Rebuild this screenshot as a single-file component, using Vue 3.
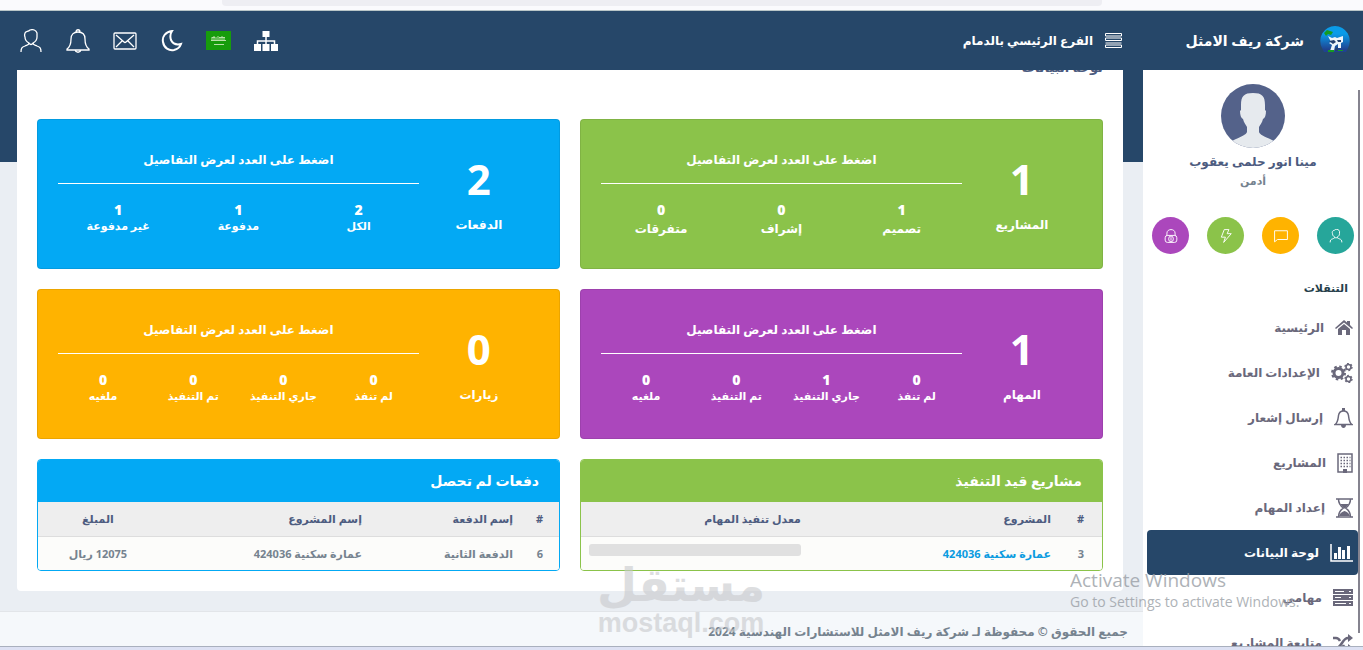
<script setup>
import { ref } from 'vue'

const person = '<path d="M1 23c0-4 1-5 4-6 2-1 4-1 4-3M21 23c0-4-1-5-4-6-2-1-4-1-4-3M5 8c-1-2 0-3 0-4 1-2 3-1 5-3 3-1 6 0 7 3v4c0 3-2 5-4 6-1 2-3 2-4 0-2-1-4-3-4-6z"/>'
const bell = '<path d="M1 20c3-2 4-5 4-10 0-5 3-7 7-7s7 2 7 7c0 5 1 8 4 10v1H1zM9 21c1 3 5 3 6 0M10 3c0-3 4-3 4 0"/>'

const topIcons = [
    { name: 'الحساب', w: 22, h: 24, art: person },
    { name: 'الإشعارات', w: 24, h: 24, art: bell },
    { name: 'الرسائل', w: 24, h: 18, art: '<rect x="1" y="1" width="22" height="16" rx="1"/><path d="M3 3l8 7q1 1 2 0l8-7M3 15l6-6M21 15l-6-6"/>' },
    { name: 'الوضع الليلي', w: 22, h: 22, art: '<path stroke-width="2" d="M11 1C4 2 1 7 2 12c1 6 6 9 11 8 4-1 6-3 7-6-4 1-8 0-10-4-1-3-1-6 1-9z"/>' },
    { name: 'اللغة', w: 25, h: 19, art: '<path fill="#179c0c" stroke="none" d="M0 0h25v19H0z"/><path stroke="#b9e0a8" stroke-width="1" d="M5 9.500h15M6 9V6M8 9V5M10 9V6M12 9V5M14 9V6M16 9V5M18 9V6M6 6.500h3M13 6.500h6M8 13.500h10"/>' },
    { name: 'الأقسام', w: 24, h: 20, art: '<path fill="currentColor" stroke="none" d="M8.500 0h7v6h-7zM0 13h7v7H0zM8.500 13h7v7h-7zM17 13h7v7h-7z"/><path stroke-width="1.500" d="M12 6v7M3.500 13v-3h17v3"/>' },
]

const shortcuts = [
    { name: 'الملف الشخصي', color: 'teal', w: 22, h: 24, art: person },
    { name: 'المحادثات', color: 'orange', w: 24, h: 24, art: '<path d="M1 3h22v15H6l-5 4z"/>' },
    { name: 'النشاط', color: 'green', w: 24, h: 24, art: '<path d="M9 1h8l-3 7h7L8 23l3-9H4z"/>' },
    { name: 'القفل', color: 'purple', w: 24, h: 24, art: '<path d="M5 12V7c0-8 14-8 14 0v5"/><rect x="2" y="11" width="20" height="12" rx="4"/><ellipse cx="12" cy="17" rx="4" ry="5"/><path d="M12 14v6"/>' },
]

const menu = [
    { label: 'الرئيسية', w: 18, h: 16, art: '<path fill="currentColor" stroke="none" d="M9 4l6 5v6h-4v-5H7v5H3V9zM9 0l3 2.500V1h3v4l3 3-1 1-8-6.500L1 9 0 8z"/>' },
    { label: 'الإعدادات العامة', w: 22, h: 20, art: '<g stroke-width="3"><circle cx="7.500" cy="10" r="4.500"/><circle cx="7.500" cy="10" r="6.500" stroke-width="2" stroke-dasharray="2.550 2.550"/></g><g stroke-width="1.600"><circle cx="17.500" cy="4" r="2.500"/><circle cx="17.500" cy="4" r="3.500" stroke-width="1.400" stroke-dasharray="1.830 1.830"/><circle cx="17.500" cy="16" r="2.500"/><circle cx="17.500" cy="16" r="3.500" stroke-width="1.400" stroke-dasharray="1.830 1.830"/></g>' },
    { label: 'إرسال إشعار', w: 19, h: 20, art: '<path stroke-width="1.500" d="M1 16.500c3-2 3-5 3.500-9C5 4 7 3 9.500 3S14 4 14.500 7.500c.5 4 .5 7 3.500 9z"/><path fill="currentColor" stroke="none" d="M7 17h5c0 4-5 4-5 0zM8 0h3v3H8z"/>' },
    { label: 'المشاريع', w: 16, h: 20, art: '<rect x="1" y="1" width="14" height="18" stroke-width="1.500"/><path stroke-width="1.500" stroke-dasharray="1.500 1.500" d="M3.500 4.500h10M3.500 7.500h10M3.500 10.500h10M3.500 13.500h10"/><path fill="currentColor" stroke="none" d="M6 16h4v4H6z"/>' },
    { label: 'إعداد المهام', w: 17, h: 20, art: '<path stroke-width="1.500" d="M0 1h17M0 19h17M2.500 1c0 5 2 7 5 9-3 2-5 4-5 9M14.500 1c0 5-2 7-5 9 3 2 5 4 5 9"/><path fill="currentColor" stroke="none" d="M4 6h9l-4.500 4.500zM3 18c1-3 3-4 5.500-5 2.500 1 4.500 2 5.500 5z"/>' },
    { label: 'لوحة البيانات', w: 23, h: 18, active: true, art: '<path stroke-width="1.500" d="M1 0v17h22"/><path fill="currentColor" stroke="none" d="M4 9h3v6H4zM8 3h3v12H8zM12 6h3v9h-3zM17 2h3v13h-3z"/>' },
    { label: 'مهامي', w: 20, h: 17, art: '<path fill="currentColor" stroke="none" fill-rule="evenodd" d="M0 0h20v5H0zM2 2v1h9V2zM16 2v1h2V2zM0 6h20v5H0zM2 8v1h6V8zM16 8v1h2V8zM0 12h20v5H0zM2 14v1h11v-1zM16 14v1h2v-1z"/>' },
    { label: 'متابعة المشاريع', w: 20, h: 18, art: '<path stroke-width="2.500" d="M0 14h3c6 0 6-10 12-10h2M0 4h3c2 0 3 1 4 3M10 11c1 2 3 3 5 3h2"/><path fill="currentColor" stroke="none" d="M15 0l5 4-5 4zM15 10l5 4-5 4z"/>' },
]

const hint = 'اضغط على العدد لعرض التفاصيل'

const cards = [
    { title: 'المشاريع', total: 1, color: 'green', large: true, stats: [['تصميم', 1], ['إشراف', 0], ['متفرقات', 0]] },
    { title: 'الدفعات', total: 2, color: 'blue', stats: [['الكل', 2], ['مدفوعة', 1], ['غير مدفوعة', 1]] },
    { title: 'المهام', total: 1, color: 'purple', stats: [['لم تنفذ', 0], ['جاري التنفيذ', 1], ['تم التنفيذ', 0], ['ملغيه', 0]] },
    { title: 'زيارات', total: 0, color: 'orange', stats: [['لم تنفذ', 0], ['جاري التنفيذ', 0], ['تم التنفيذ', 0], ['ملغيه', 0]] },
]

const progress = ref(0)
</script>


<template>
    <div class="screen" dir="rtl">
        <div class="browser-bar"><div class="address"></div></div>

        <header class="topbar">
            <a href="#" class="brand">
                <svg width="30" height="30" viewBox="0 0 30 30">
                    <defs>
                        <linearGradient id="sky" x1="0" y1="0" x2="0" y2="1">
                            <stop offset="0.3" stop-color="#0a9be8" />
                            <stop offset="0.9" stop-color="#1f4391" />
                        </linearGradient>
                    </defs>
                    <path fill="url(#sky)" d="M15 0a15 15 0 0 1 13 22l-2 4H4l-2-4A15 15 0 0 1 15 0z" />
                    <path fill="#eef4fa" d="M8 10l4 2 3-1 2 1 6-2v6l-2 1v5h-3v-4l-3 2-1 5h-4l2-6-3-2 2-1z" />
                    <path fill="#24406f" d="M9 15l5-1 2 2-3 2zM17 14h4v2h-3zM15 23l3-2v4h-3z" />
                    <path fill="#159b22" d="M4 7l3-3 6 2-2 3-3-1-2 2zM8 24h6v2H8zM18 24h5v1h-5z" />
                </svg>
                <span>شركة ريف الامثل</span>
            </a>
            <div class="branch">
                <button type="button" class="icon-btn burger" aria-label="القائمة">
                    <svg width="17" height="15" viewBox="0 0 17 15" fill="none" stroke="currentColor"><path d="M.5.500h16v2.500H.5zM.5 5h16M.5 7.500h16M.5 10h16M.5 12h16v2.500H.5zM.5 5v2.500M16.500 5v2.500" /></svg>
                </button>
                <span>الفرع الرئيسي بالدمام</span>
            </div>
            <nav class="top-icons" dir="ltr">
                <button v-for="icon in topIcons" :key="icon.name" type="button" class="icon-btn" :aria-label="icon.name">
                    <svg :width="icon.w" :height="icon.h" :viewBox="`0 0 ${icon.w} ${icon.h}`" class="line" stroke-width="1.3" v-html="icon.art"></svg>
                </button>
            </nav>
        </header>

        <div class="layout">
            <aside class="sidebar">
                <div class="profile">
                    <svg class="avatar" width="64" height="64" viewBox="0 0 64 64">
                        <clipPath id="face"><circle cx="32" cy="32" r="32" /></clipPath>
                        <g clip-path="url(#face)">
                            <path fill="#54628a" d="M0 0h64v64H0z" />
                            <path fill="#e6eaee" d="M20 21c0-9 3-12 12-12s12 3 12 12v5l1 1c0 4-1 7-3 8-1 4-3 6-4 8v5c1 3 5 4 15 9v9H11v-9c10-5 14-6 15-9v-5c-1-2-3-4-4-8-2-1-3-4-3-8l1-1z" />
                        </g>
                    </svg>
                    <h2>مينا انور حلمى يعقوب</h2>
                    <p>أدمن</p>
                </div>
                <div class="shortcuts">
                    <button v-for="s in shortcuts" :key="s.name" type="button" :class="['round', s.color]" :aria-label="s.name">
                        <svg width="14" height="14" :viewBox="`0 0 ${s.w} ${s.h}`" class="line" stroke-width="1.6" v-html="s.art"></svg>
                    </button>
                </div>
                <h3>التنقلات</h3>
                <ul class="menu">
                    <li v-for="item in menu" :key="item.label">
                        <a href="#" :class="{ active: item.active }">
                            <svg :width="item.w" :height="item.h" :viewBox="`0 0 ${item.w} ${item.h}`" class="line" v-html="item.art"></svg>
                            <span>{{ item.label }}</span>
                        </a>
                    </li>
                </ul>
                <div class="scroll-thumb"></div>
            </aside>

            <main class="main">
                <section class="panel">
                    <h1>لوحة البيانات</h1>
                    <div class="grid">
                        <article v-for="card in cards" :key="card.title" :class="['card', card.color]">
                            <div class="total">
                                <a href="#">{{ card.total }}</a>
                                <h4>{{ card.title }}</h4>
                            </div>
                            <div class="details">
                                <p class="hint">{{ hint }}</p>
                                <div :class="['stats', { large: card.large }]">
                                    <div v-for="stat in card.stats" :key="stat[0]" class="stat">
                                        <a href="#">{{ stat[1] }}</a>
                                        <span>{{ stat[0] }}</span>
                                    </div>
                                </div>
                            </div>
                        </article>

                        <article class="box green-box">
                            <h4>مشاريع قيد التنفيذ</h4>
                            <table class="projects">
                                <thead>
                                    <tr><th class="num">#</th><th class="name">المشروع</th><th id="rate">معدل تنفيذ المهام</th></tr>
                                </thead>
                                <tbody>
                                    <tr>
                                        <td>3</td>
                                        <td><a href="#">عمارة سكنية 424036</a></td>
                                        <td>
                                            <div class="progress" role="progressbar" aria-labelledby="rate" :aria-valuenow="progress">
                                                <div class="bar" :style="{ width: progress + '%' }"></div>
                                            </div>
                                        </td>
                                    </tr>
                                </tbody>
                            </table>
                        </article>

                        <article class="box blue-box">
                            <h4>دفعات لم تحصل</h4>
                            <table class="payments">
                                <thead>
                                    <tr><th class="num">#</th><th class="name">إسم الدفعة</th><th>إسم المشروع</th><th class="amount">المبلغ</th></tr>
                                </thead>
                                <tbody>
                                    <tr><td>6</td><td>الدفعة الثانية</td><td>عمارة سكنية 424036</td><td class="amount">12075 ريال</td></tr>
                                </tbody>
                            </table>
                        </article>
                    </div>
                </section>
                <footer class="footer">جميع الحقوق © محفوظة لـ شركة ريف الامثل للاستشارات الهندسية 2024</footer>
            </main>
        </div>

        <div class="taskbar"></div>

        <div class="watermark">
            <span class="mark-ar">مستقل</span>
            <span class="mark-en" dir="ltr">mostaql.com</span>
        </div>
        <div class="activate" dir="ltr">
            <strong>Activate Windows</strong>
            <span>Go to Settings to activate Windows.</span>
        </div>
    </div>
</template>

<style>
body {
    margin: 0;
}
</style>

<style scoped>
.screen {
    position: relative;
    display: flex;
    flex-direction: column;
    height: 100vh;
    overflow: hidden;
    background: #eaeef3;
    font-family: "Noto Sans", "DejaVu Sans", sans-serif;
    font-size: 11px;
    font-weight: bold;
    color: #76838f;
}

h1, h2, h3, h4, p, ul {
    margin: 0;
    padding: 0;
}

a {
    color: inherit;
    text-decoration: none;
}

button {
    border: 0;
    padding: 0;
    background: none;
    color: inherit;
    cursor: pointer;
}

svg {
    display: block;
    flex: none;
}

.line {
    fill: none;
    stroke: currentColor;
}

.browser-bar {
    flex: none;
    box-sizing: border-box;
    height: 11px;
    padding: 0 261px 0 222px;
    background: #fafafd;
    border-bottom: 1px solid #b9c6c8;
}

.address {
    height: 6px;
    background: #eeeef3;
    border-radius: 0 0 4px 4px;
}

.topbar {
    display: flex;
    flex: none;
    align-items: center;
    height: 59px;
    background: #264769;
    color: #fff;
}

.brand {
    display: flex;
    align-items: center;
    gap: 16px;
    width: 207px;
    padding-right: 13px;
    font-size: 14px;
    font-weight: 900;
}

.branch {
    display: flex;
    flex: 1;
    align-items: center;
    gap: 12px;
    padding-right: 21px;
    font-size: 12px;
}

.top-icons {
    display: flex;
    padding-left: 7px;
}

.icon-btn {
    display: flex;
    align-items: center;
    justify-content: center;
    width: 47px;
    height: 40px;
}

.burger {
    width: 17px;
}

.layout {
    display: flex;
    flex: 1;
    min-height: 0;
}

.sidebar {
    position: relative;
    flex: none;
    width: 220px;
    overflow: hidden;
    background: #fff;
}

.profile {
    display: flex;
    flex-direction: column;
    align-items: center;
    padding-top: 14px;
}

.profile h2 {
    margin-top: 4px;
    font-size: 12px;
    font-weight: 900;
    line-height: 20px;
    color: #4d5c80;
}

.profile p {
    font-size: 11px;
    line-height: 18px;
}

.shortcuts {
    display: flex;
    justify-content: space-between;
    padding: 27px 9px 0;
}

.round {
    display: flex;
    align-items: center;
    justify-content: center;
    width: 37px;
    height: 37px;
    border-radius: 50%;
    color: #fff;
}

.sidebar h3 {
    padding: 24px 15px 7px;
    font-size: 11px;
    font-weight: 900;
    line-height: 20px;
    color: #263f4b;
}

.menu {
    list-style: none;
    padding: 0 5px 0 4px;
}

.menu a {
    display: flex;
    align-items: center;
    gap: 11px;
    height: 45px;
    padding-right: 5px;
    border-radius: 4px;
    font-size: 12px;
    color: #6a687b;
}

.menu a.active {
    background: #264769;
    font-weight: 900;
    color: #fff;
}

.scroll-thumb {
    position: absolute;
    top: 20px;
    right: 3px;
    bottom: 13px;
    width: 2px;
    background: #85838f;
}

.main {
    display: flex;
    flex: 1;
    flex-direction: column;
    min-width: 0;
    overflow: hidden;
    background: linear-gradient(#264769 92px, #eaeef3 92px);
}

.panel {
    margin: 0 20px 20px 17px;
    padding: 0 20px 20px;
    background: #fff;
    border-radius: 0 0 4px 4px;
}

.panel h1 {
    margin: -13px 0 42px;
    font-size: 13px;
    line-height: 20px;
    color: #4d5c80;
}

.grid {
    display: grid;
    grid-template-columns: 1fr 1fr;
    gap: 20px;
}

.card {
    display: flex;
    box-sizing: border-box;
    height: 150px;
    padding: 0 20px;
    border: 1px solid rgba(0, 0, 0, 0.08);
    border-radius: 4px;
    color: #fff;
}

.green {
    background-color: #8bc34a;
}

.blue {
    background-color: #03a9f4;
}

.purple {
    background-color: #ab47bc;
}

.orange {
    background-color: #ffb300;
}

.teal {
    background-color: #26a69a;
}

.total {
    width: 25%;
    padding-top: 30px;
    text-align: center;
}

.total a {
    display: block;
    font-size: 42px;
    line-height: 58px;
}

.total h4 {
    margin-top: 7px;
    font-size: 12px;
    font-weight: 900;
    line-height: 20px;
}

.details {
    width: 75%;
    padding-top: 30px;
    text-align: center;
}

.hint {
    padding-bottom: 13px;
    border-bottom: 1px solid #fff;
    font-size: 12px;
    line-height: 20px;
}

.stats {
    display: flex;
    padding-top: 17px;
}

.stat {
    flex: 1;
    white-space: nowrap;
}

.stat a {
    display: block;
    font-size: 14px;
    font-weight: 900;
    line-height: 18px;
}

.stat span {
    display: block;
    font-size: 11px;
    line-height: 14px;
}

.large .stat span {
    font-size: 12px;
    line-height: 20px;
}

.box {
    overflow: hidden;
    border: 1px solid;
    border-radius: 4px;
}

.green-box {
    border-color: #8bc34a;
}

.blue-box {
    border-color: #03a9f4;
}

.box h4 {
    padding: 0 20px;
    font-size: 14px;
    line-height: 42px;
    color: #fff;
}

.green-box h4 {
    background: #8bc34a;
}

.blue-box h4 {
    background: #03a9f4;
}

table {
    width: 100%;
    table-layout: fixed;
    border-collapse: collapse;
}

th, td {
    box-sizing: border-box;
    height: 34px;
    padding: 0 8px;
    text-align: right;
    white-space: nowrap;
}

th {
    background: #eee;
    border-bottom: 1px solid #ddd;
    color: #4d5c80;
}

td {
    background: #fcfcfa;
}

td a {
    color: #0a9be0;
}

th:first-child, td:first-child {
    padding-right: 18px;
}

.payments th:first-child, .payments td:first-child {
    padding-right: 16px;
}

.projects .num {
    width: 43px;
}

.projects .name {
    width: 48%;
}

.payments .num {
    width: 38px;
}

.payments .name {
    width: 29%;
}

.payments .amount {
    width: 23%;
    text-align: center;
}

.progress {
    height: 12px;
    margin-bottom: 6px;
    overflow: hidden;
    background: #e0e0e0;
    border-radius: 3px;
}

.bar {
    height: 100%;
    background: #8bc34a;
}

.footer {
    flex: 1;
    padding: 10px 15px 0;
    background: #f5f8fb;
    border-top: 1px solid #e2e5e9;
    font-size: 12px;
    line-height: 20px;
}

.taskbar {
    flex: none;
    box-sizing: border-box;
    height: 4px;
    background: #dde1f3;
    border-top: 1px solid #a9b0be;
}

.watermark {
    position: absolute;
    left: 599px;
    bottom: 12px;
    display: flex;
    flex-direction: column;
    align-items: center;
    width: 164px;
    color: #c8c9cc;
    opacity: 0.6;
    pointer-events: none;
}

.mark-ar {
    font-size: 46px;
    line-height: 50px;
}

.mark-en {
    font-family: "Liberation Sans", sans-serif;
    font-size: 27px;
    line-height: 30px;
}

.activate {
    position: absolute;
    right: 57px;
    bottom: 38px;
    display: flex;
    flex-direction: column;
    width: 236px;
    color: #9a9fa6;
    opacity: 0.8;
    font-family: "Open Sans", sans-serif;
    font-weight: normal;
    white-space: nowrap;
    pointer-events: none;
}

.activate strong {
    font-size: 19px;
    font-weight: normal;
    line-height: 24px;
}

.activate span {
    font-size: 14px;
    line-height: 20px;
}
</style>
